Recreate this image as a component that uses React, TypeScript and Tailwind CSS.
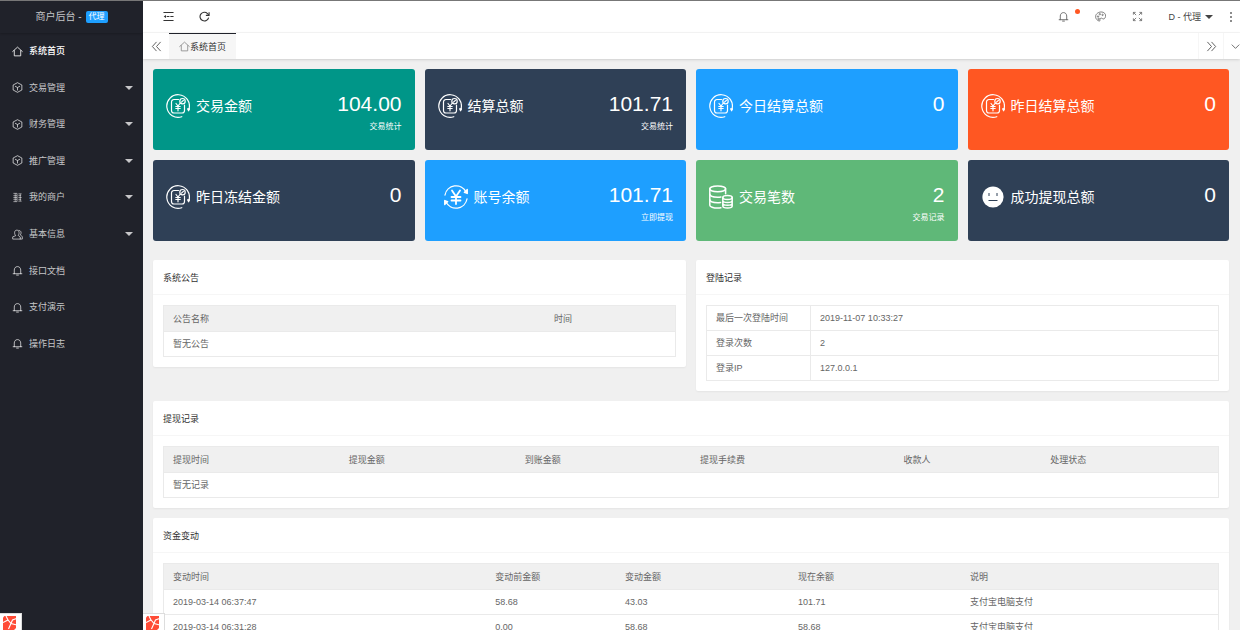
import type { ReactNode } from "react";

type IconProps = { className?: string };

/* ---------- icons ---------- */

const HomeIcon = ({ className }: IconProps) => (
  <svg viewBox="0 0 24 24" className={className} fill="none" stroke="currentColor" strokeWidth="1.800" strokeLinejoin="round" strokeLinecap="round">
    <path d="M1.500 12 12 2.500 22.500 12M5 10v11.500h14V10" />
  </svg>
);

const CubeIcon = ({ className }: IconProps) => (
  <svg viewBox="0 0 24 24" className={className} fill="none" stroke="currentColor" strokeWidth="2" strokeLinejoin="round">
    <path d="M12 1.500l9.500 5v11l-9.500 5-9.500-5v-11z" />
    <path d="M6.500 9l5.500 3 5.500-3M12 12v6.500" />
  </svg>
);

const ShopIcon = ({ className }: IconProps) => (
  <svg viewBox="0 0 24 24" className={className} fill="none" stroke="currentColor" strokeWidth="1.500">
    <path d="M3 3h8v18H3M3 8h8M3 12h8M3 16h8M7 3v18M14 4h7M14 8h6M14 12h7M14 16h6M14 20h7M18 4v16" />
  </svg>
);

const UserIcon = ({ className }: IconProps) => (
  <svg viewBox="0 0 24 24" className={className} fill="none" stroke="currentColor" strokeWidth="1.800" strokeLinejoin="round" strokeLinecap="round">
    <path d="M7.500 14C4.500 11 4.500 2.500 10.500 2.500S16.500 11 13.500 14L18 17.500V22H1.500v-4z" />
    <path d="M15 3c5.500 0 6 6.500 3 10l4.500 3.500V22H18" />
  </svg>
);

const BellIcon = ({ className }: IconProps) => (
  <svg viewBox="0 0 24 24" className={className} fill="none" stroke="currentColor" strokeWidth="2" strokeLinejoin="round" strokeLinecap="round">
    <path d="M2.500 19h19M5 19v-8c0-4.500 3-7.500 7-7.500s7 3 7 7.500v8M10 22h4" />
  </svg>
);

const FoldIcon = ({ className }: IconProps) => (
  <svg viewBox="0 0 24 24" className={className} fill="none" stroke="currentColor" strokeWidth="2.200">
    <path d="M1 3.500h22M8 12h6M16 12h7M1 20.500h22" />
    <path d="M6.500 8.500v7L1.500 12z" fill="currentColor" stroke="none" />
  </svg>
);

const RefreshIcon = ({ className }: IconProps) => (
  <svg viewBox="0 0 24 24" className={className} fill="none" stroke="currentColor" strokeWidth="2.400">
    <path d="M21 14.500A9.500 9.500 0 1 1 18.500 5.500L21 8.500" />
    <path d="M22 2.500V9.500h-7" />
  </svg>
);

const PaletteIcon = ({ className }: IconProps) => (
  <svg viewBox="0 0 24 24" className={className} fill="none" stroke="currentColor" strokeWidth="1.800">
    <path d="M9 22C1 19 -1 11 4 6s13-5 17-1 2 10-1 12-5-3-8-1 1 6-3 6z" />
    <circle cx="6.500" cy="12" r="1.500" />
    <circle cx="10.500" cy="7" r="1.500" />
    <circle cx="16.500" cy="8.500" r="1.500" />
    <circle cx="8" cy="17" r="1.500" />
  </svg>
);

const FullscreenIcon = ({ className }: IconProps) => (
  <svg viewBox="0 0 24 24" className={className} fill="none" stroke="currentColor" strokeWidth="1.800">
    <path d="M3 8V3h5M3 3l6 6M16 3h5v5M21 3l-6 6M3 16v5h5M3 21l6-6M21 16v5h-5M21 21l-6-6" />
  </svg>
);

const DotsIcon = ({ className }: IconProps) => (
  <svg viewBox="0 0 4 14" className={className} fill="currentColor">
    <circle cx="2" cy="3" r="1" />
    <circle cx="2" cy="7" r="1" />
    <circle cx="2" cy="11" r="1" />
  </svg>
);

const DoubleLeftIcon = ({ className }: IconProps) => (
  <svg viewBox="0 0 24 24" className={className} fill="none" stroke="currentColor" strokeWidth="2">
    <path d="M12 2 3 12l9 10M21 2l-9 10 9 10" />
  </svg>
);

const DoubleRightIcon = ({ className }: IconProps) => (
  <svg viewBox="0 0 24 24" className={className} fill="none" stroke="currentColor" strokeWidth="2">
    <path d="M3 2l9 10-9 10M12 2l9 10-9 10" />
  </svg>
);

const DownIcon = ({ className }: IconProps) => (
  <svg viewBox="0 0 24 24" className={className} fill="none" stroke="currentColor" strokeWidth="2.200">
    <path d="M2 7l10 10L22 7" />
  </svg>
);

const Caret = ({ className }: IconProps) => (
  <svg viewBox="0 0 8 4" className={className} fill="currentColor">
    <path d="M0 0h8L4 4z" />
  </svg>
);

const MoneyIcon = ({ className }: IconProps) => (
  <svg viewBox="0 0 24 24" className={className} fill="none" stroke="currentColor" strokeWidth="1.200" strokeLinecap="round" strokeLinejoin="round">
    <path d="M15.800 22.700A11.300 11.300 0 1 1 23 15" />
    <path d="M21.600 14.800l1 2 1-2z" fill="currentColor" />
    <path d="M12.500 5.500H8A2.500 2.500 0 0 0 5.500 8v8.500A2.500 2.500 0 0 0 8 19h8a2.500 2.500 0 0 0 2.500-2.500V11" />
    <circle cx="16.500" cy="7.200" r="2.700" />
    <path d="M15.500 8.200l1.900-1.900" />
    <path d="M10 9.500l2 2.500 2-2.500M9.800 12.500h4.400M9.800 14.500h4.400M12 12v4.800" />
  </svg>
);

const YenIcon = ({ className }: IconProps) => (
  <svg viewBox="0 0 24 24" className={className} fill="none" stroke="currentColor" strokeWidth="1.300" strokeLinecap="round" strokeLinejoin="round">
    <path d="M1 10A11.200 11.200 0 0 1 22 7M23 14A11.200 11.200 0 0 1 2 17" />
    <path d="M23.300 4.500v4l-3-1zM.7 19.500v-4l3 1z" fill="currentColor" />
    <path d="M8 5.500l4 6 4-6M7.500 12h9M7.500 15.500h9M12 11.500V19" strokeWidth="1.800" />
  </svg>
);

const CoinsIcon = ({ className }: IconProps) => (
  <svg viewBox="0 0 24 24" className={className} fill="none" stroke="currentColor" strokeWidth="1.500" strokeLinecap="round">
    <ellipse cx="8.700" cy="3.800" rx="7.900" ry="2.900" />
    <path d="M.8 3.800v16.400c0 1.500 3.500 2.900 7.900 2.900 1.200 0 2.300-.1 3.200-.3M16.600 3.800v5" />
    <path d="M.8 9.300c0 1.600 3.500 2.900 7.900 2.900 1.200 0 2.300-.1 3.200-.3M.8 14.800c0 1.600 3.500 2.900 7.900 2.900 1 0 2-.1 2.900-.2" />
    <ellipse cx="18.500" cy="12.500" rx="4.700" ry="2" />
    <path d="M13.800 12.500v8.600c0 1.100 2.100 2 4.700 2s4.700-.9 4.700-2v-8.600M13.800 15.500c0 1.100 2.100 2 4.700 2s4.700-.9 4.700-2M13.800 18.300c0 1.100 2.100 2 4.700 2s4.700-.9 4.700-2" />
  </svg>
);

const FaceIcon = ({ className }: IconProps) => (
  <svg viewBox="0 0 24 24" className={className}>
    <circle cx="12" cy="12" r="10.600" fill="currentColor" />
    <path d="M8 8v3M16 8v3M7.500 15.500h9" stroke="#2f4056" strokeWidth="1" />
  </svg>
);

const RedMark = ({ className }: IconProps) => (
  <svg viewBox="0 0 14 14" className={className}>
    <path d="M0 1.500 1.500 0H13v12l-2 2H0z" fill="#ff4b36" />
    <path d="M0 6.500l5-2.500 3 3.500 6 1.500M3 0l2 4M13.500 2.500 9.500 4l-4 9" stroke="#fff" strokeWidth="1.100" fill="none" />
  </svg>
);

/* ---------- data ---------- */

const menus = [
  { name: "系统首页", Icon: HomeIcon, active: true },
  { name: "交易管理", Icon: CubeIcon, more: true },
  { name: "财务管理", Icon: CubeIcon, more: true },
  { name: "推广管理", Icon: CubeIcon, more: true },
  { name: "我的商户", Icon: ShopIcon, more: true },
  { name: "基本信息", Icon: UserIcon, more: true },
  { name: "接口文档", Icon: BellIcon },
  { name: "支付演示", Icon: BellIcon },
  { name: "操作日志", Icon: BellIcon },
];

const stats = [
  { title: "交易金额", value: "104.00", link: "交易统计", bg: "bg-[#009688]", Icon: MoneyIcon },
  { title: "结算总额", value: "101.71", link: "交易统计", bg: "bg-[#2f4056]", Icon: MoneyIcon },
  { title: "今日结算总额", value: "0", bg: "bg-[#1e9fff]", Icon: MoneyIcon },
  { title: "昨日结算总额", value: "0", bg: "bg-[#ff5722]", Icon: MoneyIcon },
  { title: "昨日冻结金额", value: "0", bg: "bg-[#2f4056]", Icon: MoneyIcon },
  { title: "账号余额", value: "101.71", link: "立即提现", bg: "bg-[#1e9fff]", Icon: YenIcon, indent: true },
  { title: "交易笔数", value: "2", link: "交易记录", bg: "bg-[#5fb878]", Icon: CoinsIcon },
  { title: "成功提现总额", value: "0", bg: "bg-[#2f4056]", Icon: FaceIcon },
];

const loginInfo = [
  ["最后一次登陆时间", "2019-11-07 10:33:27"],
  ["登录次数", "2"],
  ["登录IP", "127.0.0.1"],
];

const noticeCols = [
  { label: "公告名称", width: "w-[74.5%]" },
  { label: "时间", width: "w-[25.5%]" },
];

const withdrawCols = [
  { label: "提现时间", width: "w-[16.7%]" },
  { label: "提现金额", width: "w-[16.7%]" },
  { label: "到账金额", width: "w-[16.6%]" },
  { label: "提现手续费", width: "w-[19.3%]" },
  { label: "收款人", width: "w-[13.9%]" },
  { label: "处理状态", width: "w-[16.8%]" },
];

const fundCols = [
  { label: "变动时间", width: "w-[30.6%]" },
  { label: "变动前金额", width: "w-[12.3%]" },
  { label: "变动金额", width: "w-[16.4%]" },
  { label: "现在余额", width: "w-[16.3%]" },
  { label: "说明", width: "w-[24.4%]" },
];

const fundRows = [
  ["2019-03-14 06:37:47", "58.68", "43.03", "101.71", "支付宝电脑支付"],
  ["2019-03-14 06:31:28", "0.00", "58.68", "58.68", "支付宝电脑支付"],
];

/* ---------- blocks ---------- */

const Panel = ({ title, children }: { title: string; children: ReactNode }) => (
  <section className="rounded-xs bg-white shadow-xs">
    <h2 className="flex h-[35px] items-center border-b border-[#f6f6f6] px-2.5 pt-px text-[#333]">{title}</h2>
    <div className="p-2.5">{children}</div>
  </section>
);

const DataTable = ({
  cols,
  rows,
  empty,
}: {
  cols: { label: string; width: string }[];
  rows?: string[][];
  empty?: string;
}) => (
  <table className="w-full table-fixed border-collapse border border-[#eaeaea] text-left text-[#666]">
    <thead>
      <tr className="h-[26px] bg-[#f0f0f0]">
        {cols.map((col) => (
          <th key={col.label} className={`px-[9px] font-normal ${col.width}`}>
            {col.label}
          </th>
        ))}
      </tr>
    </thead>
    <tbody>
      {rows?.map((row) => (
        <tr key={row[0]} className="h-[25px] border-t border-[#eaeaea]">
          {row.map((cell, i) => (
            <td key={i} className="px-[9px]">
              {cell}
            </td>
          ))}
        </tr>
      ))}
      {empty && (
        <tr className="h-[25px] border-t border-[#eaeaea]">
          <td colSpan={cols.length} className="px-[9px]">
            {empty}
          </td>
        </tr>
      )}
    </tbody>
  </table>
);

const CornerMark = () => (
  <div className="absolute bottom-0 left-0 h-[17px] w-[22px] overflow-hidden border-t border-r border-[#ddd] bg-white pt-0.5 pl-[3px]">
    <RedMark className="size-3.5" />
  </div>
);

const Sidebar = () => (
  <aside className="relative w-[143px] shrink-0 bg-[#20222a] text-white/75">
    <div className="flex h-8 items-center justify-center gap-1 text-[10px] shadow-xs shadow-black/20">
      <span>商户后台 -</span>
      <span className="rounded-xs bg-[#1e9fff] px-[3px] text-[8px] leading-3 text-white">代理</span>
    </div>
    <nav className="grid h-[329px] auto-rows-fr">
      {menus.map(({ name, Icon, active, more }) => (
        <a
          key={name}
          href="#"
          className={`flex items-center gap-1.5 pr-2.5 pl-3 ${active ? "font-medium text-white" : ""}`}
        >
          <Icon className="size-[11px]" />
          <span className="flex-1">{name}</span>
          {more && <Caret className="h-1 w-2" />}
        </a>
      ))}
    </nav>
    <CornerMark />
  </aside>
);

const Header = () => (
  <header className="flex h-8 shrink-0 items-center justify-between border-b border-[#f6f6f6] bg-white pr-[7px] pl-5 text-[#333]">
    <div className="flex items-center gap-[25px]">
      <button type="button" aria-label="侧边伸缩">
        <FoldIcon className="size-[11px]" />
      </button>
      <button type="button" aria-label="刷新">
        <RefreshIcon className="size-[11px]" />
      </button>
    </div>
    <div className="flex items-center gap-[26px] text-[#666]">
      <button type="button" aria-label="消息" className="relative">
        <BellIcon className="size-[11px]" />
        <span className="absolute -top-0.5 left-[17px] size-[5px] rounded-full bg-[#ff5722]" />
      </button>
      <button type="button" aria-label="主题">
        <PaletteIcon className="size-[11px]" />
      </button>
      <button type="button" aria-label="全屏">
        <FullscreenIcon className="size-[11px]" />
      </button>
      <button type="button" className="flex items-center gap-1 text-[#444]">
        D - 代理
        <Caret className="h-1 w-2" />
      </button>
      <button type="button" aria-label="更多" className="-ml-2.5">
        <DotsIcon className="h-3.5 w-1" />
      </button>
    </div>
  </header>
);

const TabBar = () => (
  <div className="z-10 flex h-[26px] shrink-0 bg-white text-[#333] shadow-sm">
    <button type="button" aria-label="向左" className="flex w-[26px] items-center justify-center text-[#555]">
      <DoubleLeftIcon className="size-[11px]" />
    </button>
    <a href="#" className="flex items-center border-t border-[#20222a] bg-[#f6f6f6] px-2.5">
      <HomeIcon className="size-[11px] text-[#888]" />
      系统首页
    </a>
    <button
      type="button"
      aria-label="向右"
      className="ml-auto flex w-[26px] items-center justify-center border-x border-[#f6f6f6] text-[#555]"
    >
      <DoubleRightIcon className="size-[11px]" />
    </button>
    <button type="button" aria-label="标签操作" className="flex w-4 items-center justify-end text-[#555]">
      <DownIcon className="size-[9px]" />
    </button>
  </div>
);

export default function App() {
  return (
    <div className="flex h-screen flex-col overflow-hidden border-t border-[#777] bg-[#f0f0f0] font-['Liberation_Sans','Noto_Sans_CJK_SC',sans-serif] text-[9px] leading-3">
      <div className="flex min-h-0 flex-1">
        <Sidebar />
        <div className="relative flex min-w-0 flex-1 flex-col">
          <Header />
          <TabBar />
          <main className="flex-1 overflow-y-auto py-2.5 pr-[11px] pl-2.5 [scrollbar-width:none]">
            <div className="grid grid-cols-4 gap-2.5">
              {stats.map(({ title, value, link, bg, Icon, indent }) => (
                <div key={title} className={`flex h-[81px] justify-between rounded-[3px] px-[13px] text-white ${bg}`}>
                  <div className={`flex h-[73px] items-center gap-1.5 text-[14px] ${indent ? "pl-1.5" : ""}`}>
                    <Icon className="size-6" />
                    {title}
                  </div>
                  <div className="flex flex-col items-end gap-[5px] pt-[23px]">
                    <span className="text-[21px] leading-6">{value}</span>
                    {link && (
                      <a href="#" className="text-[8px]">
                        {link}
                      </a>
                    )}
                  </div>
                </div>
              ))}
            </div>

            <div className="mt-[19px] grid grid-cols-2 items-start gap-2.5">
              <Panel title="系统公告">
                <DataTable cols={noticeCols} empty="暂无公告" />
              </Panel>
              <Panel title="登陆记录">
                <table className="w-full border-collapse text-left text-[#666]">
                  <tbody>
                    {loginInfo.map(([label, value]) => (
                      <tr key={label} className="h-[25px]">
                        <th className="w-[104px] border border-[#eaeaea] px-[9px] font-normal">{label}</th>
                        <td className="border border-[#eaeaea] px-[9px]">{value}</td>
                      </tr>
                    ))}
                  </tbody>
                </table>
              </Panel>
            </div>

            <div className="mt-2.5 flex flex-col gap-2.5">
              <Panel title="提现记录">
                <DataTable cols={withdrawCols} empty="暂无记录" />
              </Panel>
              <Panel title="资金变动">
                <DataTable cols={fundCols} rows={fundRows} />
              </Panel>
            </div>
          </main>
          <CornerMark />
        </div>
      </div>
    </div>
  );
}
